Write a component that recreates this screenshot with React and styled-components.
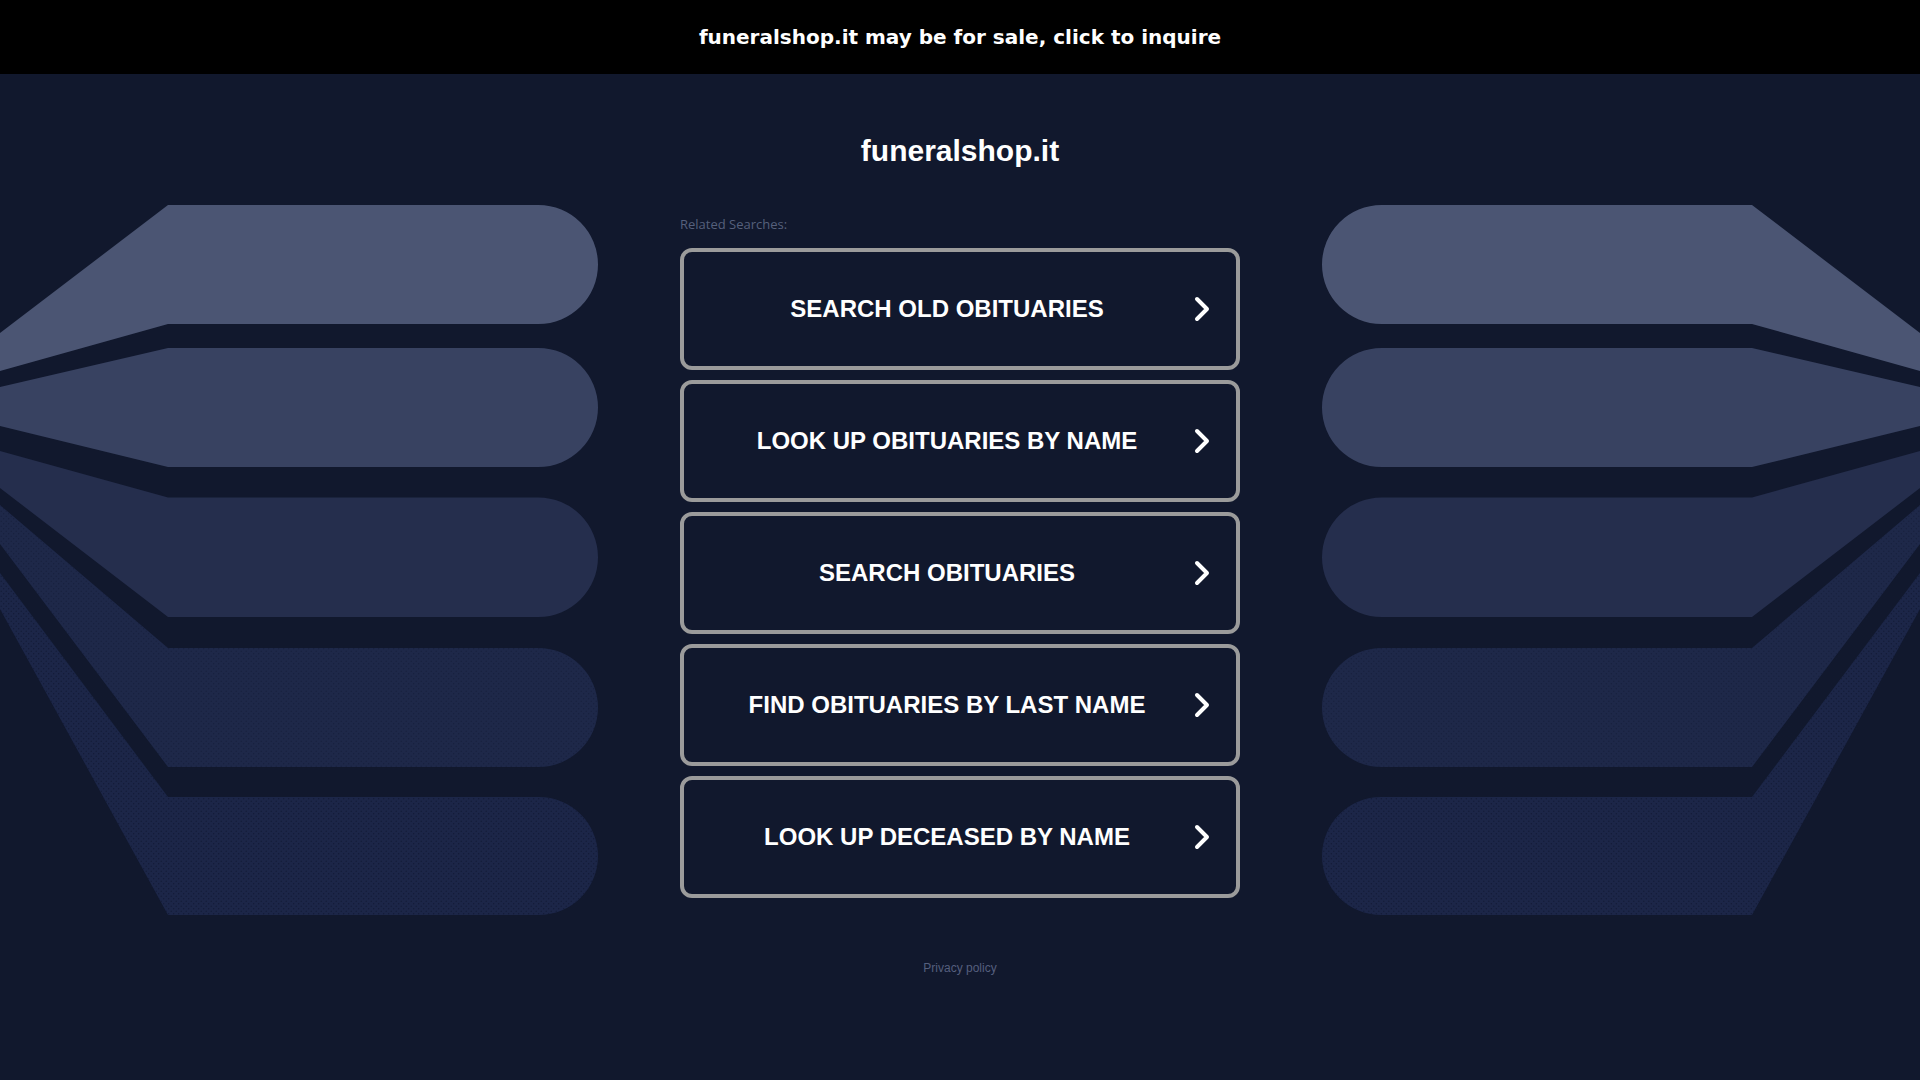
import React from "react";
import styled, { createGlobalStyle } from "styled-components";

const Global = createGlobalStyle`
  html, body { margin: 0; padding: 0; }
  body {
    background: #11182d;
    font-family: "Liberation Sans", Arial, sans-serif;
    overflow: hidden;
  }
  a { text-decoration: none; }
`;

const Page = styled.div`
  min-height: 100vh;
  display: flex;
  flex-direction: column;
`;

const TopBar = styled.a`
  height: 74px;
  background: #000;
  display: flex;
  align-items: center;
  justify-content: center;
  color: #fff;
  font-family: "DejaVu Sans", Verdana, sans-serif;
  font-weight: 700;
  font-size: 20px;
  line-height: 24px;
`;

const Stage = styled.div`
  display: grid;
  grid-template-columns: 1fr 560px 1fr;
  align-items: start;
`;

const Fan = styled.svg`
  display: block;
  width: 680px;
  height: 720px;
  margin-top: 126px;
  transform: ${(p) => (p.$mirrored ? "scaleX(-1)" : "none")};
  justify-self: ${(p) => (p.$mirrored ? "end" : "start")};
`;

const Main = styled.main`
  display: flex;
  flex-direction: column;
`;

const Title = styled.h1`
  margin: 59px 0 0;
  text-align: center;
  color: #fff;
  font-family: "Liberation Sans", Arial, sans-serif;
  font-weight: 700;
  font-size: 30px;
  line-height: 36px;
`;

const Related = styled.div`
  margin-top: 46px;
  color: #56607c;
  font-family: "Open Sans", sans-serif;
  font-size: 13px;
  line-height: 18px;
`;

const ButtonList = styled.div`
  margin-top: 15px;
  display: flex;
  flex-direction: column;
  gap: 10px;
`;

const SearchButton = styled.a`
  box-sizing: border-box;
  height: 122px;
  border: 4px solid #9b9b9b;
  border-radius: 12px;
  display: flex;
  align-items: center;
  gap: 10px;
  padding: 0 26px 0 26px;
  color: #fff;
  cursor: pointer;
`;

const Label = styled.span`
  flex: 1;
  text-align: center;
  font-family: "Liberation Sans", Arial, sans-serif;
  font-weight: 700;
  font-size: 24px;
  line-height: 28px;
  text-transform: uppercase;
`;

const Chevron = styled.svg`
  flex: none;
  width: 16px;
  height: 26px;
`;

const Footer = styled.div`
  margin-top: 60px;
  text-align: center;
`;

const Privacy = styled.a`
  color: #555f7d;
  font-family: "Liberation Sans", Arial, sans-serif;
  font-size: 12px;
  line-height: 14px;
`;

const shapes = [
  { top: 5, bottom: 124, l0: 133, l1: 171, fill: "#4b5573" },
  { top: 148, bottom: 267, l0: 187, l1: 226, fill: "#384261" },
  { top: 297.5, bottom: 417, l0: 251, l1: 288, fill: "#252e4d" },
  { top: 448, bottom: 567, l0: 305, l1: 344, fill: "#1e2849", dots: 0.5 },
  { top: 597, bottom: 715, l0: 373, l1: 409, fill: "#1c2648", dots: 0.8 },
];

const shapePath = (s) => {
  const r = (s.bottom - s.top) / 2;
  const ax = 598 - r;
  return `M0 ${s.l0} L168 ${s.top} L${ax} ${s.top} A${r} ${r} 0 0 1 ${ax} ${s.bottom} L168 ${s.bottom} L0 ${s.l1} Z`;
};

function FanArt({ mirrored, id }) {
  return (
    <Fan $mirrored={mirrored} viewBox="0 0 680 720" aria-hidden="true">
      <defs>
        <pattern id={`${id}-dots`} width="5" height="5" patternUnits="userSpaceOnUse">
          <circle cx="1.2" cy="1.2" r="0.7" fill="#0f1730" />
          <circle cx="3.7" cy="3.7" r="0.7" fill="#0f1730" />
        </pattern>
      </defs>
      {shapes.map((s, i) => (
        <g key={i}>
          <path d={shapePath(s)} fill={s.fill} />
          {s.dots ? (
            <path d={shapePath(s)} fill={`url(#${id}-dots)`} opacity={s.dots} />
          ) : null}
        </g>
      ))}
    </Fan>
  );
}

const searches = [
  "Search Old Obituaries",
  "Look Up Obituaries by Name",
  "Search Obituaries",
  "Find Obituaries by Last Name",
  "Look Up Deceased by Name",
];

export default function App() {
  return (
    <Page>
      <Global />
      <TopBar href="#">funeralshop.it may be for sale, click to inquire</TopBar>
      <Stage>
        <FanArt id="fan-left" />
        <Main>
          <Title>funeralshop.it</Title>
          <Related>Related Searches:</Related>
          <ButtonList>
            {searches.map((s) => (
              <SearchButton key={s} href="#">
                <Label>{s}</Label>
                <Chevron viewBox="0 0 16 26">
                  <path
                    d="M3 3 L13 13 L3 23"
                    fill="none"
                    stroke="#fff"
                    strokeWidth="4"
                    strokeLinecap="round"
                    strokeLinejoin="round"
                  />
                </Chevron>
              </SearchButton>
            ))}
          </ButtonList>
          <Footer>
            <Privacy href="#">Privacy policy</Privacy>
          </Footer>
        </Main>
        <FanArt id="fan-right" mirrored />
      </Stage>
    </Page>
  );
}
